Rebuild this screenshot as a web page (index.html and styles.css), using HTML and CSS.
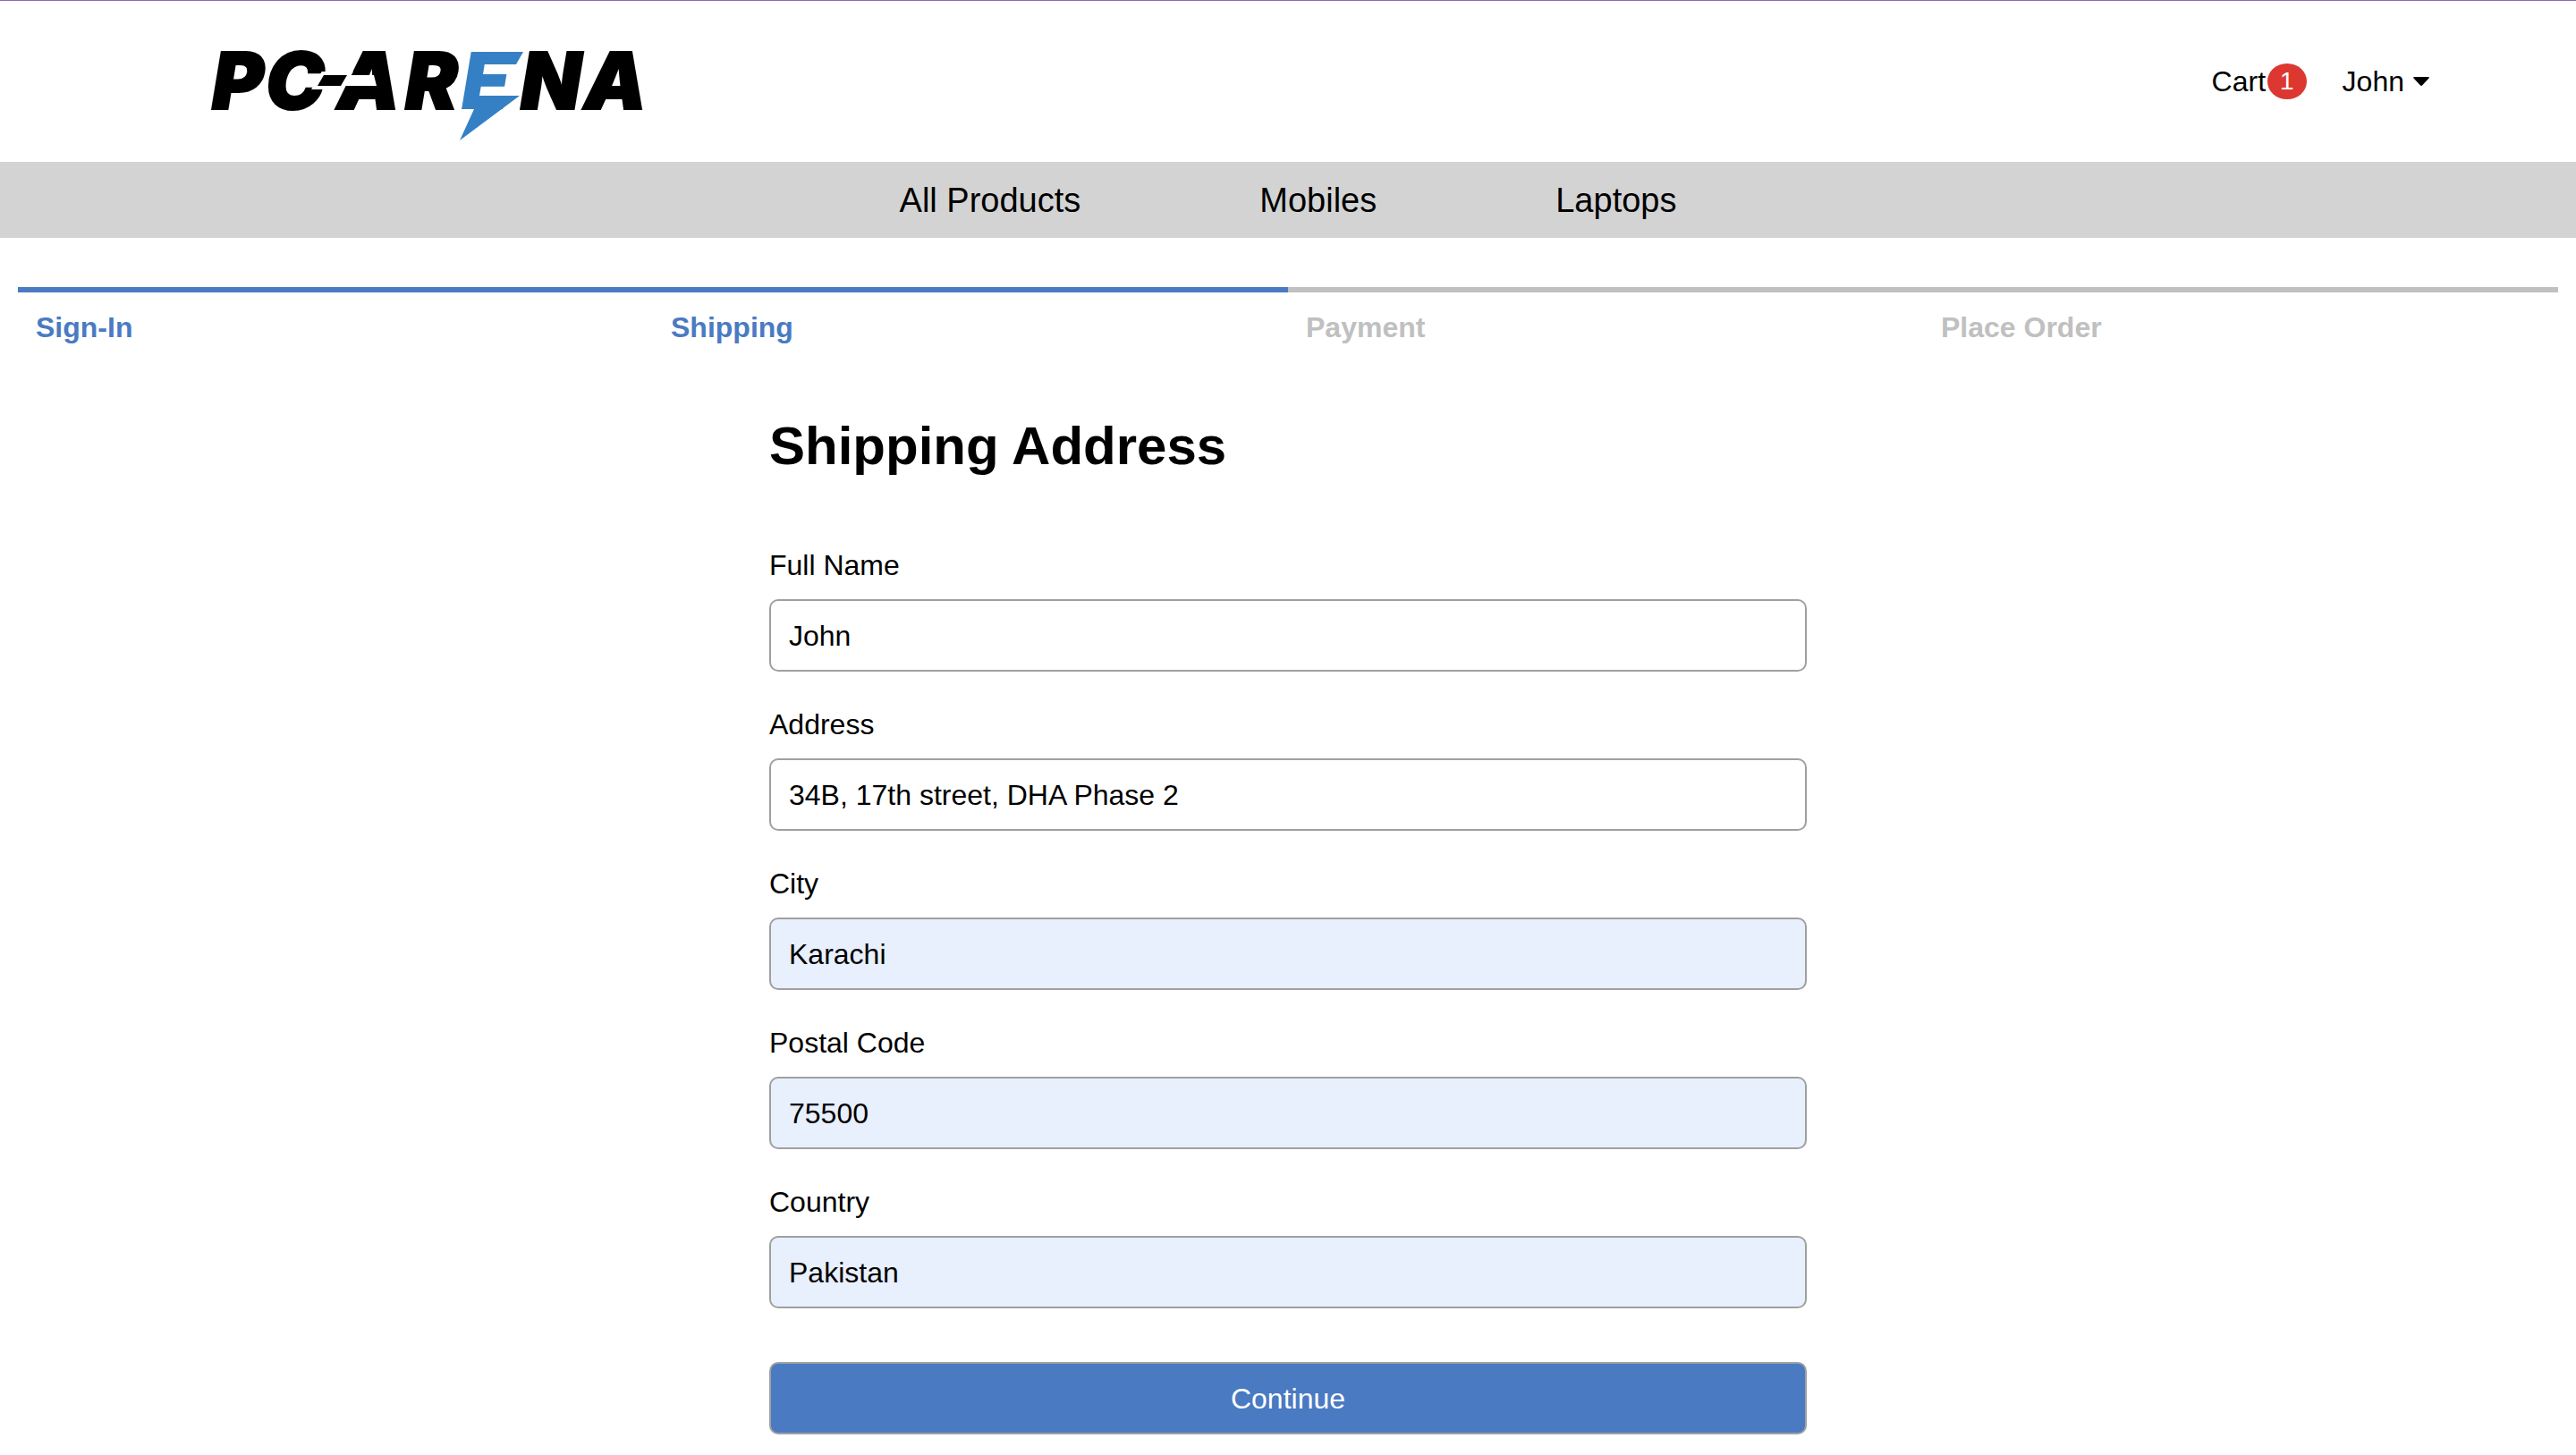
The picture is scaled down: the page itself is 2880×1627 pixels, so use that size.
FILE: index.html
```html
<!DOCTYPE html>
<html lang="en">
<head>
<meta charset="utf-8">
<title>Shipping Address - PC-Arena</title>
<meta name="viewport" content="width=device-width, initial-scale=1">
<link rel="stylesheet" href="styles.css">
</head>
<body>
<header class="header">
  <a class="brand" href="#" aria-label="PC-Arena home">
    <svg class="logo" viewBox="0 0 500 136" width="500" height="136">
      <g class="logo-text">
        <text x="13 73" y="99">PC</text>
        <text x="153 229" y="99">AR</text>
        <text class="logo-accent" x="292" y="99">E</text>
        <text x="358 429" y="99">NA</text>
      </g>
      <!-- dash and the cut that runs into the first A -->
      <path fill="#fff" d="M150 61H194L197 73H150Z"/>
      <path class="logo-dash" d="M138 61H164L157 73H131Z"/>
      <!-- lightning tip and tail -->
      <path class="logo-accent" d="M335 35H361L353 49H335Z"/>
      <path class="logo-accent" d="M300 84H357L290 134L306 99H292Z"/>
    </svg>
  </a>
  <div class="account">
    <a class="cart" href="#">Cart<span class="badge">1</span></a>
    <button class="user" type="button">John
      <svg class="caret" viewBox="0 0 18 10" width="18" height="10" aria-hidden="true"><path d="M1 0H17Q18.500 .5 17.500 1.500L10 9.500Q9 10.300 8 9.500L.5 1.500Q-.5 .5 1 0Z"/></svg>
    </button>
  </div>
</header>
<nav class="nav">
  <a href="#">All Products</a>
  <a href="#">Mobiles</a>
  <a href="#">Laptops</a>
</nav>
<main>
  <ol class="steps">
    <li class="step active">Sign-In</li>
    <li class="step active">Shipping</li>
    <li class="step">Payment</li>
    <li class="step">Place Order</li>
  </ol>
  <form class="form">
    <h1>Shipping Address</h1>
    <div class="field">
      <label for="name">Full Name</label>
      <input id="name" type="text" value="John">
    </div>
    <div class="field">
      <label for="address">Address</label>
      <input id="address" type="text" value="34B, 17th street, DHA Phase 2">
    </div>
    <div class="field">
      <label for="city">City</label>
      <input id="city" class="filled" type="text" value="Karachi">
    </div>
    <div class="field">
      <label for="postal">Postal Code</label>
      <input id="postal" class="filled" type="text" value="75500">
    </div>
    <div class="field">
      <label for="country">Country</label>
      <input id="country" class="filled" type="text" value="Pakistan">
    </div>
    <button class="submit" type="button">Continue</button>
  </form>
</main>
</body>
</html>
```
FILE: styles.css
```css
* {
  box-sizing: border-box;
}

body {
  margin: 0;
  border-top: 1px solid #8e6bb0;
  background: #fff;
  color: #000;
  font: 32px/39px "Liberation Sans", Arial, Helvetica, sans-serif;
}

a {
  color: inherit;
  text-decoration: none;
}

button,
input {
  margin: 0;
  font: inherit;
  color: inherit;
}

.header {
  display: flex;
  justify-content: space-between;
  align-items: center;
  height: 180px;
  padding: 0 164px 0 224px;
}

.brand,
.logo {
  display: block;
}

.logo-text {
  font: italic 900 88px Inter, "Liberation Sans", sans-serif;
  stroke: #000;
  stroke-width: 2px;
}

.logo-accent {
  fill: #3580c4;
  stroke: none;
}

.logo-dash {
  stroke: #fff;
  stroke-width: 8px;
  paint-order: stroke;
}

.account {
  display: flex;
  align-items: center;
  gap: 40px;
}

.cart {
  display: flex;
  align-items: center;
}

.badge {
  margin-left: 2px;
  padding: 4px 14px;
  border-radius: 50%;
  background: #dc3831;
  color: #fff;
  font-size: 28px;
  line-height: 32px;
}

.user {
  display: flex;
  align-items: center;
  gap: 10px;
  padding: 0;
  border: 0;
  background: none;
}

.caret {
  display: block;
}

.nav {
  display: flex;
  justify-content: center;
  gap: 200px;
  padding: 20px 20px 18px;
  background: #d3d3d3;
  font-size: 38px;
  line-height: 47px;
}

.steps {
  display: flex;
  margin: 55px 20px 0;
  padding: 0;
  list-style: none;
}

.step {
  flex: 1;
  padding: 20px 20px 0;
  border-top: 6px solid #c0c0c0;
  color: #c0c0c0;
  font-weight: bold;
}

.active {
  border-color: #4a7ac2;
  color: #4a7ac2;
}

.form {
  width: 1200px;
  max-width: 100%;
  margin: 0 auto;
  padding: 78px 20px 23px;
}

h1 {
  margin: 0 0 80px;
  font-size: 60px;
  line-height: 69px;
}

.field {
  display: flex;
  flex-direction: column;
  gap: 18px;
  margin-bottom: 40px;
}

.field input {
  width: 100%;
  height: 81px;
  padding: 20px 20px 18px;
  border: 2px solid #a0a0a0;
  border-radius: 10px;
  background: #fff;
}

.field .filled {
  background: #e8effd;
}

.submit {
  display: block;
  width: 100%;
  height: 81px;
  margin-top: 60px;
  padding: 20px 20px 18px;
  border: 2px solid #a0a0a0;
  border-radius: 10px;
  background: #4a7ac2;
  color: #fff;
}
```
